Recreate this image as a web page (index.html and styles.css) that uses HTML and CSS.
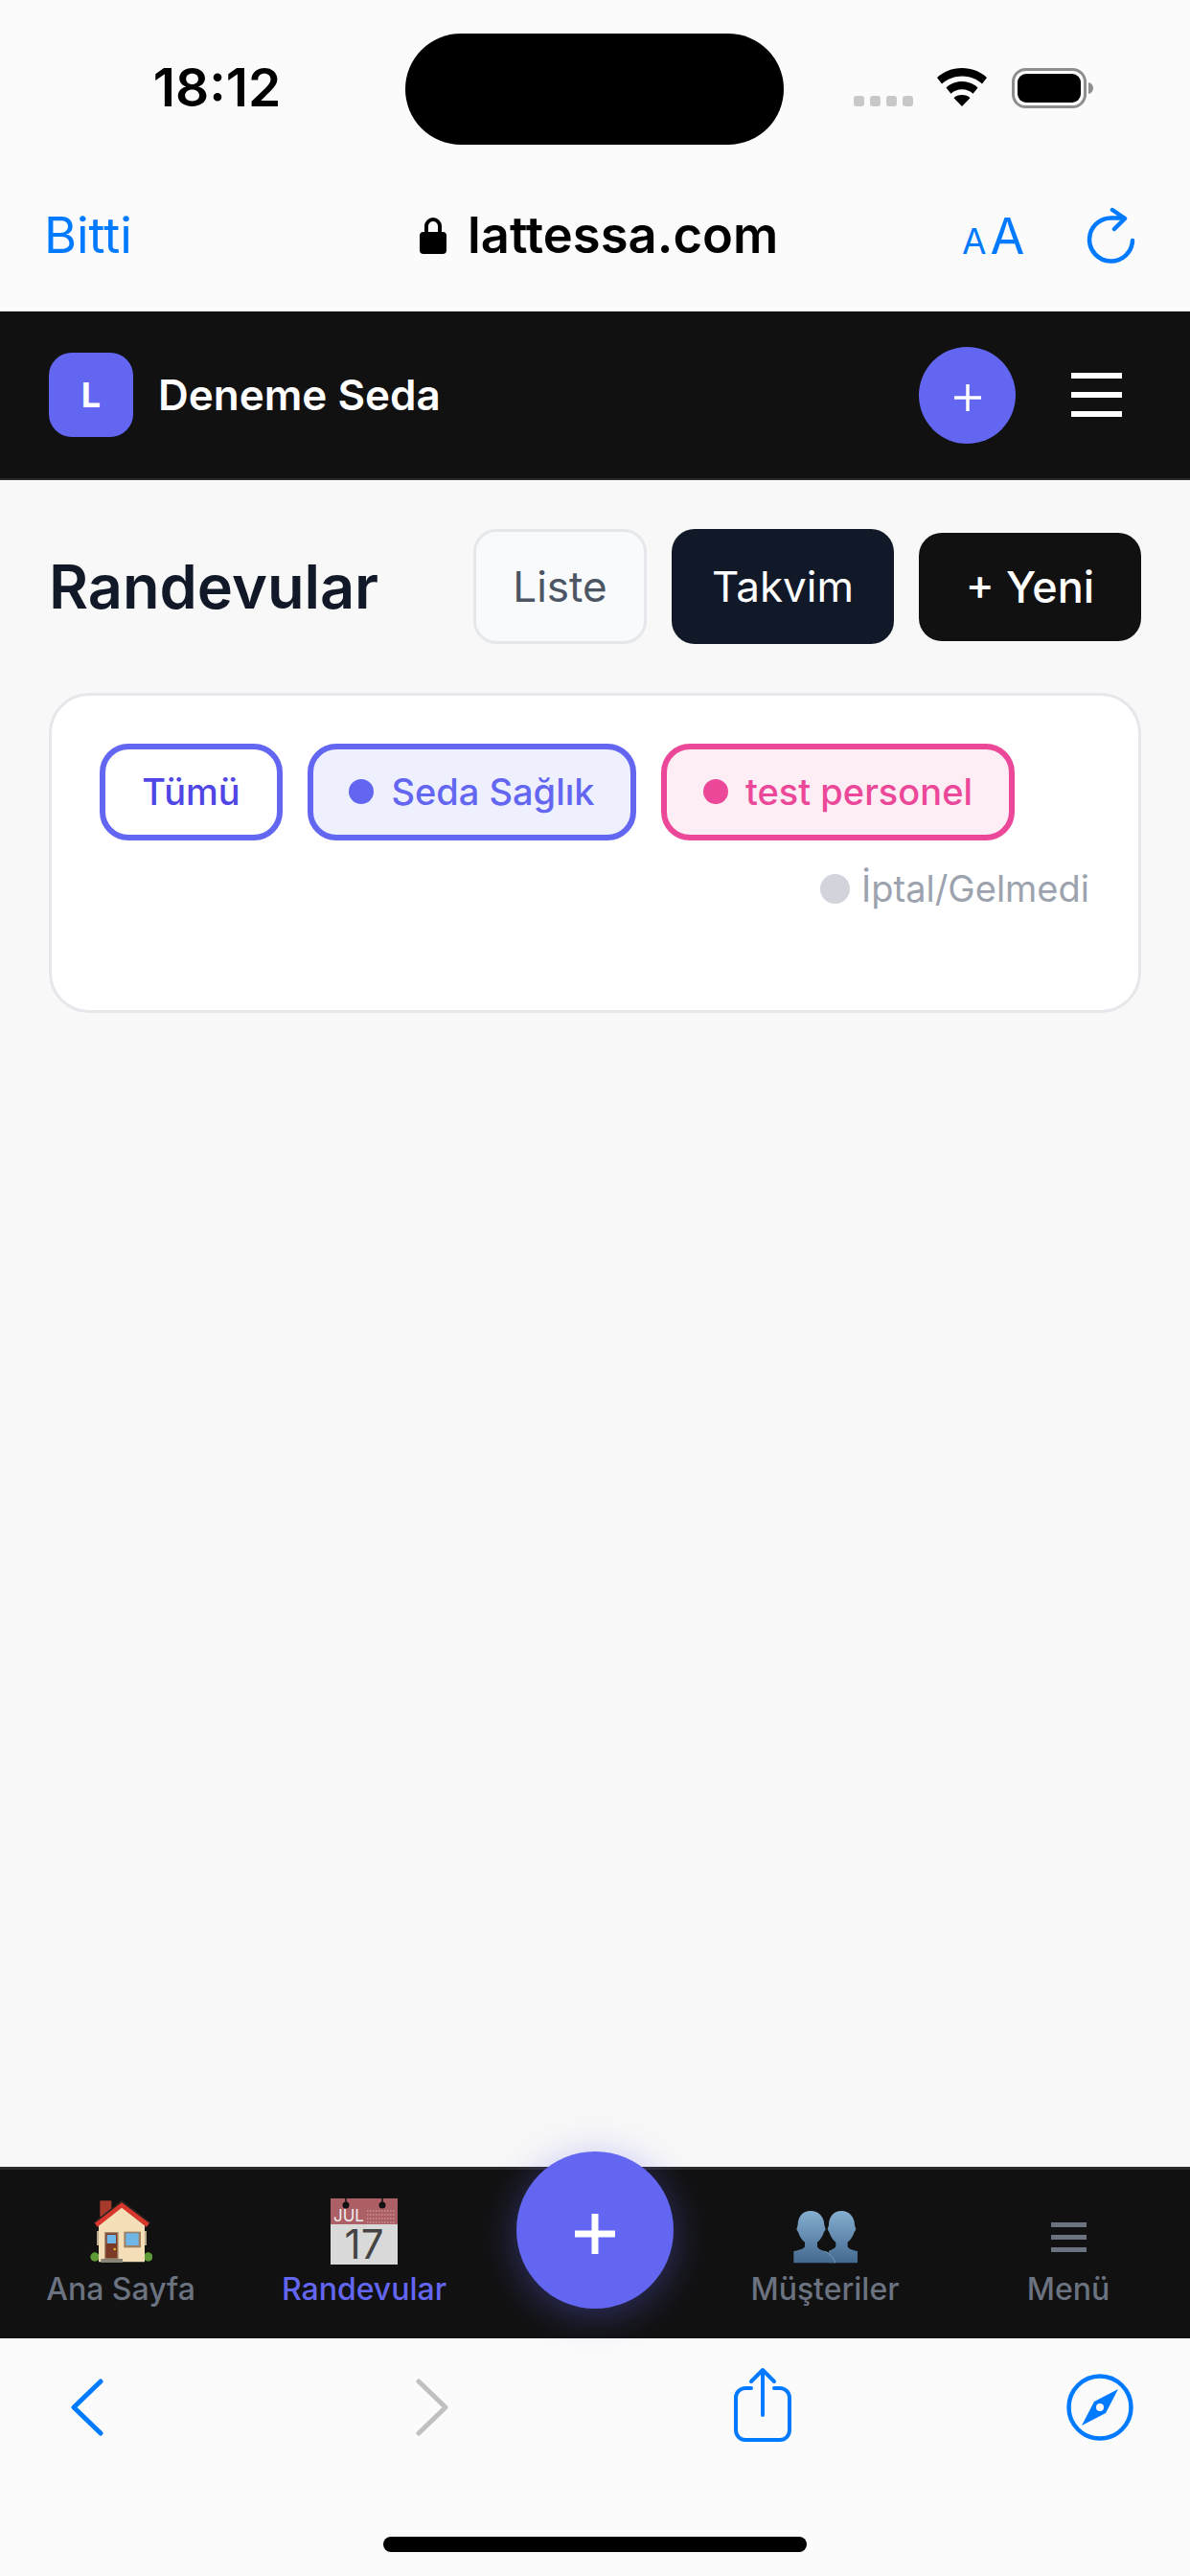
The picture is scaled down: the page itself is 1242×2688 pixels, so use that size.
FILE: index.html
```html
<!DOCTYPE html>
<html lang="tr">
<head>
  <meta charset="UTF-8">
  <title>Randevular</title>
  <link rel="stylesheet" href="styles.css">
</head>
<body>

  <div class="status-bar">
    <span class="clock">18:12</span>
    <div class="island"></div>
    <div class="status-icons">
      <div class="signal"><i></i><i></i><i></i><i></i></div>
      <svg class="wifi" width="54" height="40" viewBox="0 0 54 40">
        <path d="M27 0C16.500 0 7.500 4 1 10l5 6.500C11.500 11.500 19 8.500 27 8.500s15.500 3 21 8L53 10C46.500 4 37.500 0 27 0z"/>
        <path d="M27 14c-6.500 0-12.500 2.500-16.500 6.500l5 6.300C18.500 24 22.500 22.300 27 22.300s8.500 1.700 11.500 4.500l5-6.300C39.500 16.500 33.500 14 27 14z"/>
        <path d="M27 28c-3.500 0-6.500 1.200-8.500 3.200L27 40l8.500-8.800C33.500 29.200 30.500 28 27 28z"/>
      </svg>
      <svg class="battery" width="87" height="42" viewBox="0 0 87 42">
        <rect x="1.500" y="1.500" width="75" height="39" rx="13" fill="none" stroke="#8e8e8e" stroke-width="3"/>
        <rect x="6" y="6" width="66" height="30" rx="9" fill="#000"/>
        <path d="M80 15c3 .6 5 3 5 6s-2 5.400-5 6z" fill="#8e8e8e"/>
      </svg>
    </div>
  </div>

  <div class="browser-bar">
    <span class="done">Bitti</span>
    <div class="address">
      <svg width="30" height="40" viewBox="0 0 30 40">
        <path d="M8 17v-7a7 7 0 0 1 14 0v7" fill="none" stroke="#000" stroke-width="4"/>
        <rect x="1" y="16" width="28" height="23" rx="4" fill="#000"/>
      </svg>
      <span>lattessa.com</span>
    </div>
    <div class="reader"><small>A</small>A</div>
    <svg class="reload" width="54" height="62" viewBox="0 0 54 62" fill="none" stroke="#007aff" stroke-width="4.500" stroke-linecap="round" stroke-linejoin="round">
      <path d="M48 35a22.500 22.500 0 1 1-22-23.500h13"/>
      <path d="M27 3l13 9-11 11"/>
    </svg>
  </div>

  <div class="app-header">
    <div class="brand">
      <div class="brand-logo">L</div>
      <span class="brand-name">Deneme Seda</span>
    </div>
    <div class="header-actions">
      <div class="round-add"><svg width="30" height="30" viewBox="0 0 30 30"><path d="M15 1v28M1 15h28" stroke="#fff" stroke-width="3.500"/></svg></div>
      <div class="burger"><i></i><i></i><i></i></div>
    </div>
  </div>

  <div class="page">
    <div class="page-top">
      <h1>Randevular</h1>
      <div class="page-actions">
        <button class="btn btn-light">Liste</button>
        <button class="btn btn-navy">Takvim</button>
        <button class="btn btn-black">+ Yeni</button>
      </div>
    </div>

    <div class="card">
      <div class="chips">
        <div class="chip chip-all">Tümü</div>
        <div class="chip chip-seda"><span class="dot"></span>Seda Sağlık</div>
        <div class="chip chip-test"><span class="dot"></span>test personel</div>
      </div>
      <div class="legend"><span class="dot"></span>İptal/Gelmedi</div>
    </div>
  </div>

  <div class="tab-bar">
    <div class="tab">
      <svg width="66" height="70" viewBox="98 30 198 210">
        <circle cx="116" cy="216" r="14" fill="#5e9a35"/>
        <circle cx="283" cy="216" r="14" fill="#5e9a35"/>
        <rect x="132" y="40" width="36" height="50" fill="#a83a2c"/>
        <path d="M200 38L112 108l13 17h153l12-17z" fill="#2b2320"/>
        <rect x="122" y="135" width="156" height="45" fill="#b9a98c"/>
        <path d="M200 60l-72 58v114h144V118z" fill="#f4dfb8"/>
        <path d="M200 46l-84 64 8 12 76-60 78 60 8-12z" fill="#d9362c"/>
        <rect x="146" y="138" width="44" height="84" fill="#a98d6b"/>
        <rect x="150" y="142" width="36" height="78" fill="#7a3a26"/>
        <rect x="154" y="147" width="28" height="27" fill="#6fb7e8"/>
        <circle cx="178" cy="192" r="4" fill="#f0b030"/>
        <rect x="135" y="222" width="68" height="12" fill="#8a8378"/>
        <rect x="207" y="137" width="53" height="50" fill="#9f8062"/>
        <rect x="213" y="142" width="40" height="38" fill="#6fb5e6"/>
      </svg>
      <span>Ana Sayfa</span>
    </div>
    <div class="tab tab-active">
      <svg class="calendar" width="70" height="80" viewBox="0 0 70 80">
        <rect x="0" y="1" width="70" height="69" fill="#d9d9d9"/>
        <rect x="0" y="1" width="70" height="27" fill="#ac5f65"/>
        <path d="M16 0v6M54 0v6" stroke="#111" stroke-width="1.500"/>
        <circle cx="16" cy="8" r="3.500" fill="#111"/>
        <circle cx="54" cy="8" r="3.500" fill="#111"/>
        <text x="3" y="25" class="cal-month">JUL</text>
        <path d="M38 14h30M38 18h30M38 22h30M38 26h30" stroke="#c99296" stroke-width="1.500" stroke-dasharray="1.500 1.500"/>
        <text x="35" y="64" class="cal-day">17</text>
      </svg>
      <span>Randevular</span>
    </div>
    <div></div>
    <div class="tab">
      <svg width="68" height="70" viewBox="81 0 204 210">
        <defs>
          <linearGradient id="person" x1="0" y1="0" x2="0" y2="1">
            <stop offset="0" stop-color="#85aed0"/>
            <stop offset="1" stop-color="#44698f"/>
          </linearGradient>
        </defs>
        <path d="M235 42c-24 0-40 18-40 44l-4 14 6 10c4 12 10 22 20 30v14c-4 6-12 10-22 13L195 205h90v-37c-15-2-27-6-31-14v-14c10-8 16-18 20-30l6-10-4-14c0-26-19-44-41-44z" fill="url(#person)"/>
        <path d="M138 42c-24 0-40 18-40 44l-4 14 6 10c4 12 10 22 20 30v14c-4 8-20 12-35 14v37h130c-2-16-12-30-30-36-14-4-24-8-26-15v-14c10-8 16-18 20-30l6-10-4-14c0-26-19-44-43-44z" fill="url(#person)"/>
        <path d="M182 169c15 5 28 18 33 36" fill="none" stroke="#86aac8" stroke-width="2"/>
      </svg>
      <span>Müşteriler</span>
    </div>
    <div class="tab">
      <div class="tab-menu"><i></i><i></i><i></i></div>
      <span>Menü</span>
    </div>
    <div class="fab"><svg width="44" height="44" viewBox="0 0 44 44"><path d="M22 1v42M1 22h42" stroke="#fff" stroke-width="7"/></svg></div>
  </div>

  <div class="safari-bar">
    <div class="safari-tools">
      <svg width="36" height="60" viewBox="0 0 36 60" fill="none" stroke="#007aff" stroke-width="5" stroke-linecap="round" stroke-linejoin="round"><path d="M32 3L4 30l28 27"/></svg>
      <svg width="36" height="60" viewBox="0 0 36 60" fill="none" stroke="#c0c0c0" stroke-width="5" stroke-linecap="round" stroke-linejoin="round"><path d="M4 3l28 27L4 57"/></svg>
      <svg class="share" width="60" height="78" viewBox="0 0 60 78" fill="none" stroke="#007aff" stroke-width="4" stroke-linecap="round" stroke-linejoin="round">
        <path d="M18 22h-6a10 10 0 0 0-10 10v34a10 10 0 0 0 10 10h36a10 10 0 0 0 10-10V32a10 10 0 0 0-10-10h-6"/>
        <path d="M30 50V3M18 15L30 3l12 12"/>
      </svg>
      <svg width="70" height="70" viewBox="0 0 70 70">
        <circle cx="35" cy="35" r="32.500" fill="none" stroke="#007aff" stroke-width="4.500"/>
        <path d="M54 16L41 41 16 54l13-25z" fill="#007aff"/>
        <circle cx="35" cy="35" r="4" fill="#fbfbfb"/>
      </svg>
    </div>
    <div class="home-bar"></div>
  </div>

</body>
</html>
```

FILE: styles.css
```css
* {
  box-sizing: border-box;
}

html, body {
  height: 100%;
}

body {
  font-family: Inter, 'Noto Sans', sans-serif;
  background-color: #f8f8f8;
  color: #111827;
  margin: 0;
  display: flex;
  flex-direction: column;
  height: 2688px;
  overflow: hidden;
}

/* phone status bar */
.status-bar {
  height: 170px;
  flex-shrink: 0;
  background-color: #fbfbfb;
  display: grid;
  grid-template-columns: 423px 395px 1fr;
  padding-top: 35px;
}

.clock {
  font-size: 55px;
  font-weight: 600;
  color: #000;
  text-align: center;
  padding-left: 30px;
  line-height: 112px;
}

.island {
  height: 116px;
  background-color: #000;
  border-radius: 58px;
}

.status-icons {
  display: flex;
  align-items: flex-start;
  padding: 36px 0 0 73px;
}

.signal {
  display: flex;
  gap: 6px;
  margin-top: 29px;
}

.signal i {
  width: 11px;
  height: 11px;
  background-color: #c8c8c8;
  border-radius: 3px;
}

.wifi {
  margin-left: 24px;
}

.battery {
  margin-left: 25px;
}

/* safari address row */
.browser-bar {
  height: 155px;
  flex-shrink: 0;
  background-color: #fbfbfb;
  display: flex;
  align-items: center;
  padding: 0 0 0 46px;
}

.done {
  font-size: 52px;
  color: #007aff;
  width: 391px;
  margin-top: -5px;
}

.address {
  display: flex;
  align-items: center;
  gap: 21px;
  font-size: 52.5px;
  font-weight: 600;
  color: #000;
  width: 567px;
  margin-top: -5px;
}

.address svg {
  margin-top: 1px;
}

.reader {
  font-size: 52px;
  color: #007aff;
  width: 130px;
  line-height: 60px;
  margin-top: 3px;
  white-space: nowrap;
}

.reader small {
  font-size: 37px;
  margin-right: 4px;
}

.reload {
  margin-top: -2px;
}

/* app */
.app-header {
  height: 176px;
  flex-shrink: 0;
  background-color: #111;
  border-bottom: 2px solid #2a2a2a;
  display: flex;
  justify-content: space-between;
  align-items: center;
  padding: 0 71px 0 51px;
}

.brand {
  display: flex;
  align-items: center;
  gap: 26px;
}

.brand-logo {
  width: 88px;
  height: 88px;
  background-color: #6366f1;
  border-radius: 24px;
  color: white;
  font-size: 36px;
  font-weight: 700;
  display: flex;
  align-items: center;
  justify-content: center;
}

.brand-name {
  color: white;
  font-size: 44px;
  font-weight: 600;
}

.header-actions {
  display: flex;
  align-items: center;
  gap: 58px;
}

.round-add {
  width: 101px;
  height: 101px;
  background-color: #6366f1;
  border-radius: 50%;
  display: flex;
  align-items: center;
  justify-content: center;
  padding-top: 6px;
}

.burger {
  display: flex;
  flex-direction: column;
  gap: 14px;
}

.burger i {
  width: 53px;
  height: 6px;
  background-color: white;
}

.page {
  flex: 1;
  padding: 51px 51px 0;
}

.page-top {
  display: flex;
  justify-content: space-between;
  align-items: center;
}

h1 {
  margin: 0;
  font-size: 63px;
  font-weight: 600;
  color: #111827;
}

.page-actions {
  display: flex;
  align-items: center;
  gap: 26px;
}

.btn {
  font-family: inherit;
  font-size: 44px;
  height: 120px;
  border-radius: 24px;
  padding: 0;
}

.btn-light {
  width: 181px;
  background-color: #f9fafb;
  border: 3px solid #e5e7eb;
  color: #4b5563;
}

.btn-navy {
  width: 232px;
  background-color: #111827;
  border: none;
  color: white;
}

.btn-black {
  width: 232px;
  height: 113px;
  background-color: #111;
  border: none;
  color: white;
  font-size: 45px;
  font-weight: 500;
}

.card {
  height: 334px;
  margin-top: 51px;
  background-color: white;
  border: 3px solid #e5e7eb;
  border-radius: 42px;
  padding: 50px;
}

.chips {
  display: flex;
  gap: 26px;
}

.chip {
  height: 101px;
  border: 6px solid #6366f1;
  border-radius: 30px;
  font-size: 38px;
  font-weight: 500;
  display: flex;
  align-items: center;
  justify-content: center;
  gap: 18px;
  padding-bottom: 2px;
}

.dot {
  width: 26px;
  height: 26px;
  border-radius: 50%;
}

.chip-all {
  width: 191px;
  color: #4f46e5;
  background-color: white;
}

.chip-seda {
  width: 343px;
  color: #6366f1;
  background-color: #eff0fe;
}

.chip-seda .dot {
  background-color: #6366f1;
}

.chip-test {
  width: 369px;
  color: #ec4899;
  background-color: #fdeef6;
  border-color: #ec4899;
}

.chip-test .dot {
  background-color: #ec4899;
}

.legend {
  display: flex;
  justify-content: flex-end;
  align-items: center;
  gap: 12px;
  margin-top: 27px;
  padding-right: 1px;
  font-size: 38px;
  color: #9ca3af;
}

.legend .dot {
  width: 31px;
  height: 31px;
  background-color: #d1d5db;
}

/* bottom navigation */
.tab-bar {
  height: 179px;
  flex-shrink: 0;
  background-color: #111;
  border-top: 3px solid #2a2a2a;
  display: grid;
  grid-template-columns: 252px 256px 1fr 254px 254px;
  position: relative;
}

.tab {
  display: flex;
  flex-direction: column;
  align-items: center;
  justify-content: flex-end;
  height: 144px;
  gap: 6px;
  color: #6b7280;
  font-size: 32px;
  font-weight: 500;
}

.tab-active {
  color: #6366f1;
}

.calendar {
  margin-bottom: -10px;
}

.cal-month {
  font-family: Inter, sans-serif;
  font-size: 17px;
  font-weight: 400;
  fill: #eee;
}

.cal-day {
  font-family: Inter, sans-serif;
  font-size: 42px;
  font-weight: 400;
  fill: #444;
  text-anchor: middle;
}

.tab-menu {
  display: flex;
  flex-direction: column;
  justify-content: flex-end;
  gap: 8px;
  height: 70px;
  padding-bottom: 13px;
}

.tab-menu i {
  width: 37px;
  height: 5px;
  background-color: #6b7280;
}

.fab {
  position: absolute;
  left: 539px;
  top: -19px;
  width: 164px;
  height: 164px;
  background-color: #6366f1;
  border-radius: 50%;
  box-shadow: 0 6px 40px rgba(99, 102, 241, 0.4);
  display: flex;
  align-items: center;
  justify-content: center;
  padding-top: 8px;
}

/* safari toolbar */
.safari-bar {
  height: 248px;
  flex-shrink: 0;
  background-color: #fbfbfb;
  display: flex;
  flex-direction: column;
  align-items: center;
}

.safari-tools {
  width: 100%;
  height: 144px;
  margin-bottom: 63px;
  padding-left: 73px;
  display: grid;
  grid-template-columns: 360px 333px 347px 1fr;
  align-items: center;
}

.share {
  margin-bottom: 6px;
}

.home-bar {
  width: 442px;
  height: 16px;
  background-color: #000;
  border-radius: 8px;
}
```
